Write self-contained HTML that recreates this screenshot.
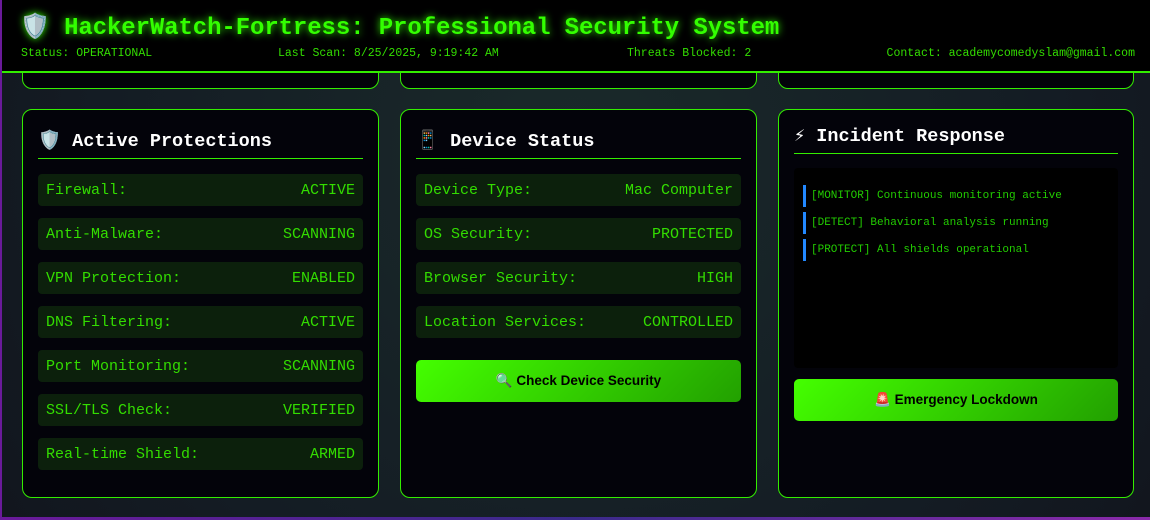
<!DOCTYPE html><html><head><style>
*{box-sizing:border-box;margin:0;padding:0}
body{width:1150px;height:520px;overflow:hidden;background:linear-gradient(90deg,#6a1a9a,#3a2a8a 50%,#8a2aaa);font-family:"Liberation Mono",monospace;position:relative}
.bg{position:absolute;left:2px;top:0;right:0;bottom:3px;background:radial-gradient(circle at 50% 30%,#1a2a2a,#141c24 70%,#12161e)}
.hdr{position:absolute;left:2px;top:0;right:0;height:73px;background:#000;border-bottom:2px solid #33ee00}
.hdr h1{position:absolute;left:18px;top:12px;font-size:24px;color:#33ff00;text-shadow:0 0 8px #33ff00;font-weight:bold;white-space:nowrap;letter-spacing:-0.1px}
.st{position:absolute;top:47px;font-size:11.5px;color:#33dd00}
.card{position:absolute;background:#03030a;border:1.5px solid #33ee00;border-radius:10px}
.top{top:40px;height:49px}
.main{top:109px;height:389px}
.ttl{position:absolute;left:15px;right:15px;font-size:18.5px;font-weight:bold;color:#fff;border-bottom:1.5px solid #33ee00;padding-bottom:6px}
.row{position:absolute;left:15px;right:15px;height:32px;background:#0c200c;border-radius:4px;color:#33dd00;font-size:15px;display:flex;justify-content:space-between;align-items:center;padding:0 8px}
.btn{position:absolute;left:15px;right:15px;height:42px;border-radius:5px;background:linear-gradient(135deg,#44ff00,#22a000);font-family:"Liberation Sans",sans-serif;font-weight:bold;font-size:13px;color:#000;display:flex;align-items:center;justify-content:center}
.log{position:absolute;left:15px;right:15px;top:58px;height:200px;background:#000;border-radius:4px}
.l{position:absolute;left:9px;border-left:3px solid #2288ff;padding-left:5px;font-size:11px;color:#22cc00;height:22px;line-height:22px}
</style></head><body><div class="bg"></div>
<div class="card top" style="left:22px;width:357px"></div>
<div class="card top" style="left:400px;width:357px"></div>
<div class="card top" style="left:778px;width:356px"></div>
<div class="hdr"><h1>🛡️ HackerWatch-Fortress: Professional Security System</h1>
<span class="st" style="left:19px">Status: OPERATIONAL</span>
<span class="st" style="left:276px">Last Scan: 8/25/2025, 9:19:42 AM</span>
<span class="st" style="left:625px">Threats Blocked: 2</span>
<span class="st" style="right:15px">Contact: academycomedyslam@gmail.com</span></div>
<div class="card main" style="left:22px;width:357px">
<div class="ttl" style="top:19px">🛡️ Active Protections</div>
<div class="row" style="top:64px"><span>Firewall:</span><span>ACTIVE</span></div>
<div class="row" style="top:108px"><span>Anti-Malware:</span><span>SCANNING</span></div>
<div class="row" style="top:152px"><span>VPN Protection:</span><span>ENABLED</span></div>
<div class="row" style="top:196px"><span>DNS Filtering:</span><span>ACTIVE</span></div>
<div class="row" style="top:240px"><span>Port Monitoring:</span><span>SCANNING</span></div>
<div class="row" style="top:284px"><span>SSL/TLS Check:</span><span>VERIFIED</span></div>
<div class="row" style="top:328px"><span>Real-time Shield:</span><span>ARMED</span></div>
</div>
<div class="card main" style="left:400px;width:357px">
<div class="ttl" style="top:19px">📱 Device Status</div>
<div class="row" style="top:64px"><span>Device Type:</span><span>Mac Computer</span></div>
<div class="row" style="top:108px"><span>OS Security:</span><span>PROTECTED</span></div>
<div class="row" style="top:152px"><span>Browser Security:</span><span>HIGH</span></div>
<div class="row" style="top:196px"><span>Location Services:</span><span>CONTROLLED</span></div>
<div class="btn" style="top:250px;font-size:13.5px">🔍 Check Device Security</div>
</div>
<div class="card main" style="left:778px;width:356px">
<div class="ttl" style="top:15px">⚡ Incident Response</div>
<div class="log">
<div class="l" style="top:17px">[MONITOR] Continuous monitoring active</div>
<div class="l" style="top:44px">[DETECT] Behavioral analysis running</div>
<div class="l" style="top:71px">[PROTECT] All shields operational</div>
</div>
<div class="btn" style="top:269px;font-size:13.5px">🚨 Emergency Lockdown</div>
</div>
</body></html>
